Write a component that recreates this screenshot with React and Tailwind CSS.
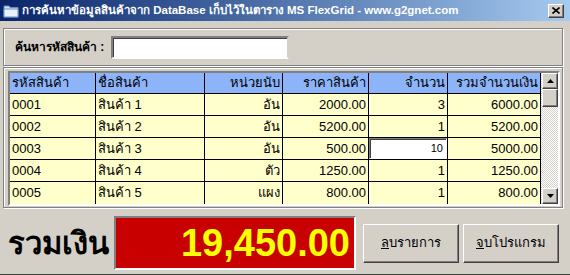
import React from 'react';

const rows = [
  { code: '0001', name: 'สินค้า 1', unit: 'อัน', price: '2000.00', qty: '3', total: '6000.00' },
  { code: '0002', name: 'สินค้า 2', unit: 'อัน', price: '5200.00', qty: '1', total: '5200.00' },
  { code: '0003', name: 'สินค้า 3', unit: 'อัน', price: '500.00', qty: '10', total: '5000.00', editing: true },
  { code: '0004', name: 'สินค้า 4', unit: 'ตัว', price: '1250.00', qty: '1', total: '1250.00' },
  { code: '0005', name: 'สินค้า 5', unit: 'แผง', price: '800.00', qty: '1', total: '800.00' },
];

const cols = [
  { label: 'รหัสสินค้า', key: 'code', w: 'w-[86px]', align: 'text-left' },
  { label: 'ชื่อสินค้า', key: 'name', w: 'w-[109px]', align: 'text-left' },
  { label: 'หน่วยนับ', key: 'unit', w: 'w-[78px]', align: 'text-right' },
  { label: 'ราคาสินค้า', key: 'price', w: 'w-[86px]', align: 'text-right' },
  { label: 'จำนวน', key: 'qty', w: 'w-[79px]', align: 'text-right' },
  { label: 'รวมจำนวนเงิน', key: 'total', w: 'w-[93px]', align: 'text-right' },
];

const raised = 'border border-t-white border-l-white border-b-[#404040] border-r-[#404040] shadow-[inset_-1px_-1px_0_#808080]';

const FolderIcon = () => (
  <svg width="16" height="14" viewBox="0 0 16 14">
    <path d="M1 2h5l1 1.5h8V13H1z" fill="#cfe3f7" stroke="#6b8fb8" strokeWidth="1" />
    <path d="M1 5h14v8H1z" fill="#e8f2fc" stroke="#6b8fb8" strokeWidth="1" />
  </svg>
);

const Arrow = ({ down }) => (
  <svg width="7" height="4" viewBox="0 0 7 4">
    <path d={down ? 'M0 0h7L3.5 4z' : 'M0 4h7L3.5 0z'} fill="#000" />
  </svg>
);

const ScrollBar = () => (
  <div className="w-[17px] flex flex-col pl-px bg-[repeating-conic-gradient(#ffffff_0_25%,#d4d0c8_0_50%)] bg-[length:2px_2px]">
    <div className={`h-[16px] bg-[#d4d0c8] flex items-center justify-center ${raised}`}>
      <Arrow />
    </div>
    <div className={`h-[18px] bg-[#d4d0c8] ${raised}`} />
    <div className="flex-1" />
    <div className={`h-[16px] bg-[#d4d0c8] flex items-center justify-center ${raised}`}>
      <Arrow down />
    </div>
  </div>
);

const App = () => {
  return (
    <div className="w-[570px] h-[275px] bg-[#d4d0c8] flex flex-col overflow-hidden border-b border-[#404040] font-['Liberation_Sans','Noto_Sans',sans-serif] text-[13px] text-black">
      <div className="h-[21px] flex items-center bg-linear-to-r from-[#0a246a] to-[#a6caf0] pl-[3px] pr-[6px]">
        <FolderIcon />
        <span className="ml-[3px] text-white font-bold text-[11.5px] leading-none whitespace-nowrap">
          การค้นหาข้อมูลสินค้าจาก DataBase เก็บไว้ในตาราง MS FlexGrid - www.g2gnet.com
        </span>
        <div className={`ml-auto w-[16px] h-[14px] bg-[#d4d0c8] flex items-center justify-center ${raised}`}>
          <svg width="8" height="7" viewBox="0 0 8 7">
            <path d="M0.5 0.5l7 6M7.5 0.5l-7 6" stroke="#000" strokeWidth="1.6" />
          </svg>
        </div>
      </div>

      <div className="mx-[3px] mr-[7px] mt-[7px] h-[38px] border border-[#808080] shadow-[inset_1px_1px_0_#fff,1px_1px_0_#fff] flex items-center pl-[11px]">
        <span className="font-bold text-[12px] whitespace-nowrap">ค้นหารหัสสินค้า :</span>
        <div className="ml-[7px] w-[178px] h-[23px] bg-white border-2 border-t-[#808080] border-l-[#808080] border-b-white border-r-[#d4d0c8] shadow-[inset_1px_1px_0_#404040]" />
      </div>

      <div className="mx-[3px] mr-[7px] mt-px border border-[#808080] shadow-[inset_1px_1px_0_#fff,1px_1px_0_#fff] pl-[4px] pr-[2px] pt-[3px] pb-px">
        <div className="border-2 border-t-[#808080] border-l-[#808080] border-b-white border-r-white shadow-[inset_1px_1px_0_#404040] flex">
          <div className="flex flex-col">
            <div className="h-[21px] flex bg-[#8db4f8] border-b border-black">
              {cols.map((c) => (
                <div key={c.key} className={`${c.w} ${c.align} px-[2px] border-r border-black leading-[20px] whitespace-nowrap`}>
                  {c.label}
                </div>
              ))}
            </div>
            {rows.map((r) => (
              <div key={r.code} className="h-[22px] flex bg-[#ffffcc] border-b border-black last:border-b-0">
                {cols.map((c) =>
                  r.editing && c.key === 'qty' ? (
                    <div key={c.key} className={`${c.w} border-r border-black`}>
                      <div className="h-full bg-white border border-t-[#808080] border-l-[#808080] border-b-white border-r-white shadow-[inset_1px_1px_0_#404040] text-right pr-[3px] text-[11px] leading-[19px]">
                        {r[c.key]}
                      </div>
                    </div>
                  ) : (
                    <div key={c.key} className={`${c.w} ${c.align} px-[2px] border-r border-black leading-[21px] whitespace-nowrap`}>
                      {r[c.key]}
                    </div>
                  )
                )}
              </div>
            ))}
          </div>
          <ScrollBar />
        </div>
      </div>

      <div className="flex items-center pl-[8px] mt-[8px]">
        <span className="w-[106px] text-[31px] font-bold leading-none whitespace-nowrap">รวมเงิน</span>
        <div className="w-[242px] h-[54px] bg-[#c80000] border-2 border-t-[#808080] border-l-[#808080] border-b-white border-r-white flex items-center justify-end pr-[4px]">
          <span className="text-[#ffff00] text-[38px] font-bold leading-none">19,450.00</span>
        </div>
        <button className={`ml-[7px] w-[96px] h-[39px] bg-[#d4d0c8] ${raised}`}>
          <span className="underline">ล</span>บรายการ
        </button>
        <button className={`ml-[4px] w-[96px] h-[39px] bg-[#d4d0c8] ${raised}`}>
          <span className="underline">จ</span>บโปรแกรม
        </button>
      </div>
    </div>
  );
};

export default App;
